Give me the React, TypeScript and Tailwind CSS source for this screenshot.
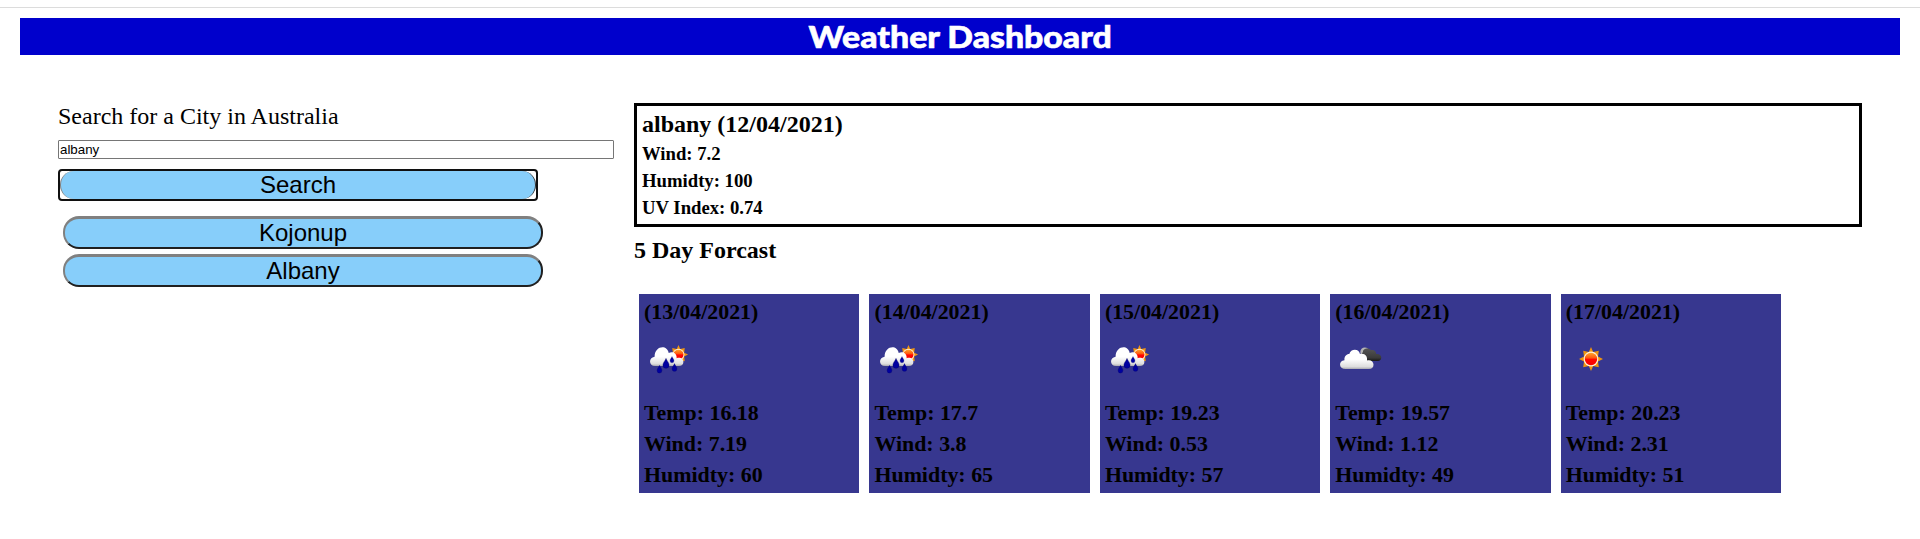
import React from 'react';

type IconName = 'rain' | 'clouds' | 'sun';

interface Day {
  date: string;
  icon: IconName;
  temp: string;
  wind: string;
  humidity: string;
}

const days: Day[] = [
  { date: '13/04/2021', icon: 'rain', temp: '16.18', wind: '7.19', humidity: '60' },
  { date: '14/04/2021', icon: 'rain', temp: '17.7', wind: '3.8', humidity: '65' },
  { date: '15/04/2021', icon: 'rain', temp: '19.23', wind: '0.53', humidity: '57' },
  { date: '16/04/2021', icon: 'clouds', temp: '19.57', wind: '1.12', humidity: '49' },
  { date: '17/04/2021', icon: 'sun', temp: '20.23', wind: '2.31', humidity: '51' },
];

const history = ['Kojonup', 'Albany'];

function Defs() {
  return (
    <defs>
      <linearGradient id="cloud" x1="0" y1="0" x2="0" y2="1">
        <stop offset="0.5" stopColor="#ffffff" />
        <stop offset="0.88" stopColor="#dedede" />
        <stop offset="1" stopColor="#a9a9b0" />
      </linearGradient>
      <linearGradient id="dark" x1="0" y1="0" x2="0" y2="1">
        <stop offset="0" stopColor="#555555" />
        <stop offset="0.75" stopColor="#3a3a3a" />
        <stop offset="1" stopColor="#161616" />
      </linearGradient>
      <linearGradient id="core" x1="0" y1="0" x2="0" y2="1">
        <stop offset="0" stopColor="#ffa62b" />
        <stop offset="0.4" stopColor="#ff5a10" />
        <stop offset="0.55" stopColor="#ff0500" />
        <stop offset="1" stopColor="#f80000" />
      </linearGradient>
    </defs>
  );
}

function Sun({ scale = 1 }: { scale?: number }) {
  return (
    <g transform={`scale(${scale})`}>
      <path
        d="M0-12 2.2-7 7.8-8.2 7-2.4 12 0 7 2.4 7.8 8.2 2.2 7 0 12-2.2 7-7.8 8.2-7 2.4-12 0-7-2.4-7.8-8.2-2.2-7Z"
        fill="#f0950f"
      />
      <circle r="7.4" fill="#fff0d8" />
      <circle r="6.2" fill="url(#core)" />
    </g>
  );
}

function Drop({ x, y, s }: { x: number; y: number; s: number }) {
  return (
    <path
      transform={`translate(${x} ${y}) scale(${s})`}
      d="M0-5C.6-2.8 3-1 3 1.5A3 3.2 0 0 1-3 1.5C-3-1-.6-2.8 0-5Z"
      fill="#0000a0"
      stroke="#00006a"
      strokeWidth="0.4"
    />
  );
}

function WeatherIcon({ name }: { name: IconName }) {
  return (
    <svg className="block size-[50px]" viewBox="0 0 50 50">
      <Defs />
      {name === 'rain' && (
        <>
          <g transform="translate(34.5 20.6)">
            <Sun scale={0.8} />
          </g>
          <path
            d="M11 32C4.700 32 4.300 23.500 10.600 22.700C10.600 12 23 10 24.700 19C29 16.600 33.300 20 32.600 24.200C36 22.700 39.600 24.800 39.400 28C39.300 30.500 37.600 32 35 32Z"
            fill="url(#cloud)"
          />
          <Drop x={22} y={29.500} s={1.02} />
          <Drop x={28} y={25.800} s={0.65} />
          <Drop x={15.500} y={35.300} s={0.8} />
          <Drop x={30.500} y={33.600} s={0.8} />
        </>
      )}
      {name === 'clouds' && (
        <>
          <circle cx="29.800" cy="18" r="4.500" fill="#b5b5b5" />
          <path
            d="M29 27C25 25 25.500 20 28 18C27.500 14.500 34 13 36 16.300C39 15.300 41.200 17.500 41.200 20C44 19.600 46.300 21.300 46.300 23.600C46.300 25.800 44.800 27 43 27Z"
            fill="url(#dark)"
          />
          <path
            d="M10.500 35C3.500 35 3.300 26.700 9.500 26.200C8.800 22.300 12 19.800 14.300 20C15.500 14.500 24 14 25 20C29.500 18.600 32.800 22 32 26.500C35.500 25.200 38.500 27.700 38.500 30.500C38.500 33.300 37 35 34 35Z"
            fill="url(#cloud)"
          />
        </>
      )}
      {name === 'sun' && (
        <g transform="translate(25 25)">
          <Sun />
        </g>
      )}
    </svg>
  );
}

const pill =
  "h-[33px] w-[480px] rounded-[16px] border-2 border-t-[3px] border-t-[#808080] border-l-[#808080] border-r-[#202020] border-b-[#202020] bg-[#87cefa] text-center font-['Liberation_Sans',sans-serif] text-[24px] leading-[28px] text-black";

export default function App() {
  return (
    <div className="h-[539px] overflow-hidden bg-white pt-[7px] font-['Liberation_Serif',serif] text-black">
      <div className="h-px bg-[#dcdcdc]" />
      <header className="mx-5 mt-[10px] flex h-[37px] items-center justify-center bg-[#0000cc]">
        <h1 className="scale-x-[1.09] font-['Lato',sans-serif] text-[31px] leading-[37px] font-black text-white [-webkit-text-stroke:0.6px_white]">
          Weather Dashboard
        </h1>
      </header>

      <main className="flex pt-12 pl-[58px]">
        <section className="w-[576px]">
          <label htmlFor="city" className="block h-[37px] text-[24px] leading-[27px]">
            Search for a City in Australia
          </label>
          <input
            id="city"
            defaultValue="albany"
            className="block h-[19px] w-[556px] rounded-[1px] border border-[#767676] px-[1px] font-['Liberation_Sans',sans-serif] text-[13.333px] leading-[15px]"
          />
          <div className="mt-[10px] h-8 w-[480px] overflow-hidden rounded-[4px] border-2 border-[#101010]">
            <button className="block h-7 w-[476px] rounded-[14px] border-x-[1.5px] border-r-[#303030] border-l-[#808080] bg-[#87cefa] text-center font-['Liberation_Sans',sans-serif] text-[24px] leading-[28px]">
              Search
            </button>
          </div>
          <div className="mt-[15px] ml-[5px] flex flex-col gap-[5px]">
            {history.map((city) => (
              <button key={city} className={pill}>
                {city}
              </button>
            ))}
          </div>
        </section>

        <section className="w-[1228px]">
          <div className="h-[124px] border-[3px] border-black px-[5px] font-bold">
            <h2 className="h-[34px] text-[24px] leading-[37px]">albany (12/04/2021)</h2>
            <div className="text-[18.72px] leading-[27px]">
              <p>Wind: 7.2</p>
              <p>Humidty: 100</p>
              <p>UV Index: 0.74</p>
            </div>
          </div>
          <h2 className="mt-2 h-[54px] text-[24px] leading-[30px] font-bold">5 Day Forcast</h2>
          <div className="mt-[5px] ml-[5px] flex gap-[10px]">
            {days.map((day) => (
              <article
                key={day.date}
                className="h-[199px] w-[220.45px] shrink-0 bg-[#37378f] px-[5px] pt-[2px] text-[21.9px] leading-[31px] font-bold"
              >
                <h3>({day.date})</h3>
                <div className="mt-[7px] mb-[13px]">
                  <WeatherIcon name={day.icon} />
                </div>
                <p>Temp: {day.temp}</p>
                <p>Wind: {day.wind}</p>
                <p>Humidty: {day.humidity}</p>
              </article>
            ))}
          </div>
        </section>
      </main>
    </div>
  );
}
